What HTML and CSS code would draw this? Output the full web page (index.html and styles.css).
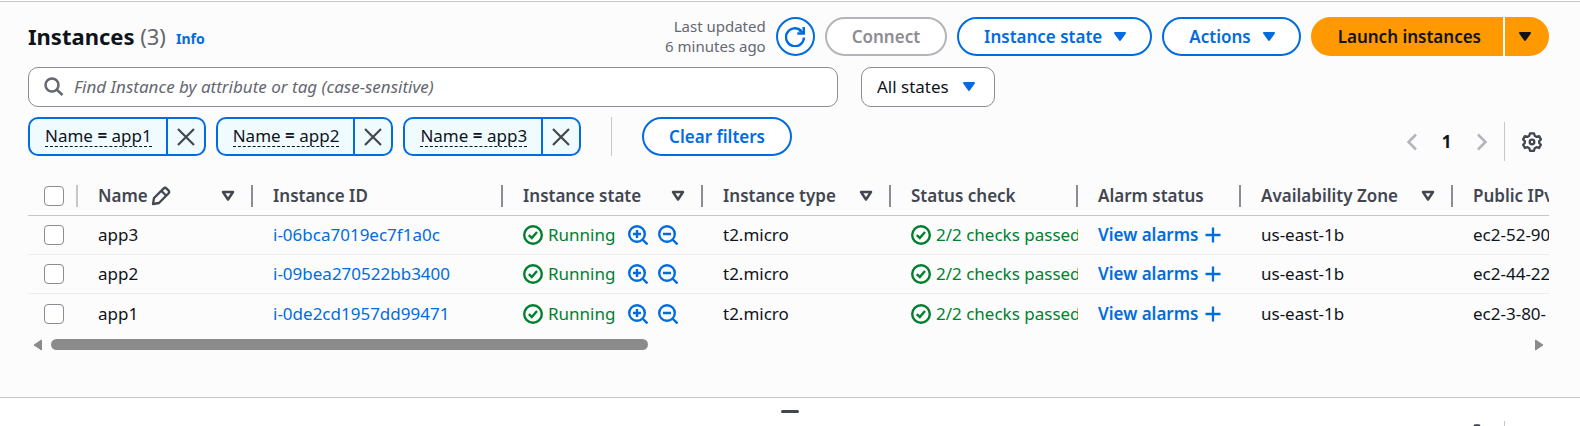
FILE: index.html
```html
<!DOCTYPE html>
<html lang="en">
<head>
<meta charset="utf-8">
<meta name="viewport" content="width=device-width, initial-scale=1">
<title>Instances</title>
<link rel="stylesheet" href="styles.css">
</head>
<body>
<svg class="sprite" aria-hidden="true">
  <symbol id="caret" viewBox="0 0 20 20"><path d="M5 6h10l-5 7z" fill="currentColor" stroke="currentColor" stroke-width="2" stroke-linejoin="round"/></symbol>
  <symbol id="sort" viewBox="0 0 20 20"><path d="M5 6h10l-5 7.500z" fill="none" stroke="currentColor" stroke-width="2.500" stroke-linejoin="round"/></symbol>
  <symbol id="close" viewBox="0 0 20 20"><path d="M2 2l16 16M18 2L2 18" fill="none" stroke="currentColor" stroke-width="2.200"/></symbol>
  <symbol id="refresh" viewBox="0 0 20 20"><path d="M19 10.500a9 9 0 1 1-3-7" fill="none" stroke="currentColor" stroke-width="2.400"/><path d="M18.800 0v6.500h-6.500" fill="none" stroke="currentColor" stroke-width="2.600"/><path d="M14 3l4.500 3" stroke="currentColor" stroke-width="2.400"/></symbol>
  <symbol id="search" viewBox="0 0 20 20"><circle cx="8" cy="8" r="6.500" fill="none" stroke="currentColor" stroke-width="2.500"/><path d="M12.500 12.500l6 5.500" stroke="currentColor" stroke-width="2.500"/></symbol>
  <symbol id="pencil" viewBox="0 0 20 20"><path d="M2 18l1-6L12.500 2.600a2.200 2.200 0 0 1 3.100 0l1.800 1.800a2.200 2.200 0 0 1 0 3.100L8 17zM10.500 5l4.500 4.500" fill="none" stroke="currentColor" stroke-width="2.300" stroke-linejoin="round"/></symbol>
  <symbol id="check" viewBox="0 0 20 20"><circle cx="10" cy="10" r="8.800" fill="none" stroke="currentColor" stroke-width="2.400"/><path d="M5.800 10.200l3 2.800 5.200-6" fill="none" stroke="currentColor" stroke-width="2.400"/></symbol>
  <symbol id="zoom-in" viewBox="0 0 20 20"><circle cx="9" cy="9" r="7.800" fill="none" stroke="currentColor" stroke-width="2.400"/><path d="M14.500 14.500l5 5M9 5v8M5 9h8" fill="none" stroke="currentColor" stroke-width="2.400"/></symbol>
  <symbol id="zoom-out" viewBox="0 0 20 20"><circle cx="9" cy="9" r="7.800" fill="none" stroke="currentColor" stroke-width="2.400"/><path d="M14.500 14.500l5 5M5 9h8" fill="none" stroke="currentColor" stroke-width="2.400"/></symbol>
  <symbol id="plus" viewBox="0 0 20 20"><path d="M10 2.500v15M2.500 10h15" stroke="currentColor" stroke-width="2.300"/></symbol>
  <symbol id="prev" viewBox="0 0 20 20"><path d="M14 2.500L6.500 10l7.500 7.500" fill="none" stroke="currentColor" stroke-width="2.500"/></symbol>
  <symbol id="next" viewBox="0 0 20 20"><path d="M6 2.500l7.500 7.500L6 17.500" fill="none" stroke="currentColor" stroke-width="2.500"/></symbol>
  <symbol id="gear" viewBox="0 0 20 20"><path d="M8 1.300h4l.7 2.500 1.900 1.100 2.500-.8 1.800 3.300-1.700 1.700v1.900l1.700 1.700-1.800 3.300-2.500-.8-1.900 1.100-.7 2.500H8l-.7-2.500-1.900-1.100-2.500.8-1.800-3.300 1.700-1.700V9.100L1.100 7.400l1.800-3.300 2.500.8 1.900-1.100z" fill="none" stroke="currentColor" stroke-width="2.300" stroke-linejoin="round"/><circle cx="10" cy="10" r="2.300" fill="none" stroke="currentColor" stroke-width="2.300"/></symbol>
  <symbol id="scroll-left" viewBox="0 0 10 12"><path d="M8.500 1v10L1 6z" fill="currentColor" stroke="currentColor" stroke-linejoin="round"/></symbol>
  <symbol id="scroll-right" viewBox="0 0 10 12"><path d="M1.500 1v10L9 6z" fill="currentColor" stroke="currentColor" stroke-linejoin="round"/></symbol>
</svg>

<main class="panel">
  <header class="header">
    <h1 class="title">Instances <span class="count">(3)</span></h1>
    <a class="info" href="#">Info</a>
    <div class="actions">
      <p class="updated">Last updated<br>6 minutes ago</p>
      <button class="btn btn-round" type="button" aria-label="Refresh"><svg class="icon"><use href="#refresh"/></svg></button>
      <button class="btn" type="button" disabled>Connect</button>
      <button class="btn btn-drop" type="button">Instance state<svg class="icon"><use href="#caret"/></svg></button>
      <button class="btn btn-drop" type="button">Actions<svg class="icon"><use href="#caret"/></svg></button>
      <div class="split">
        <button class="btn btn-primary split-main" type="button">Launch instances</button>
        <button class="btn btn-primary split-menu" type="button" aria-label="More launch options"><svg class="icon"><use href="#caret"/></svg></button>
      </div>
    </div>
  </header>

  <div class="filters">
    <label class="search">
      <svg class="icon"><use href="#search"/></svg>
      <input class="search-input" type="text" aria-label="Find Instance" placeholder="Find Instance by attribute or tag (case-sensitive)">
    </label>
    <div class="states">
      <select class="states-select" aria-label="State filter"><option>All states</option></select>
      <svg class="icon states-caret"><use href="#caret"/></svg>
    </div>
  </div>

  <div class="toolbar">
    <div class="tokens">
      <div class="token"><button class="token-label" type="button"><span class="token-text">Name <b>=</b> app1</span></button><button class="token-close" type="button" aria-label="Remove app1"><svg class="icon"><use href="#close"/></svg></button></div>
      <div class="token"><button class="token-label" type="button"><span class="token-text">Name <b>=</b> app2</span></button><button class="token-close" type="button" aria-label="Remove app2"><svg class="icon"><use href="#close"/></svg></button></div>
      <div class="token"><button class="token-label" type="button"><span class="token-text">Name <b>=</b> app3</span></button><button class="token-close" type="button" aria-label="Remove app3"><svg class="icon"><use href="#close"/></svg></button></div>
      <div class="clear"><button class="btn" type="button">Clear filters</button></div>
    </div>
    <nav class="pager" aria-label="Pages">
      <button class="pager-btn" type="button" disabled aria-label="Previous page"><svg class="icon"><use href="#prev"/></svg></button>
      <button class="pager-page" type="button">1</button>
      <button class="pager-btn" type="button" disabled aria-label="Next page"><svg class="icon"><use href="#next"/></svg></button>
      <div class="prefs"><button class="prefs-btn" type="button" aria-label="Preferences"><svg class="icon"><use href="#gear"/></svg></button></div>
    </nav>
  </div>

  <div class="table-wrap">
    <table class="table">
      <colgroup><col class="c-select"><col class="c-name"><col class="c-id"><col class="c-state"><col class="c-type"><col class="c-status"><col class="c-alarm"><col class="c-zone"><col class="c-dns"></colgroup>
      <thead>
        <tr>
          <th class="select-cell"><input class="check" type="checkbox" aria-label="Select all"></th>
          <th><div class="th">Name<svg class="icon"><use href="#pencil"/></svg><svg class="icon sort"><use href="#sort"/></svg></div></th>
          <th><div class="th">Instance ID</div></th>
          <th><div class="th">Instance state<svg class="icon sort"><use href="#sort"/></svg></div></th>
          <th><div class="th">Instance type<svg class="icon sort"><use href="#sort"/></svg></div></th>
          <th><div class="th">Status check</div></th>
          <th><div class="th">Alarm status</div></th>
          <th><div class="th">Availability Zone<svg class="icon sort"><use href="#sort"/></svg></div></th>
          <th><div class="th">Public IPv4 DNS</div></th>
        </tr>
      </thead>
      <tbody>
        <tr>
          <td class="select-cell"><input class="check" type="checkbox" aria-label="Select app3"></td>
          <td>app3</td>
          <td><a class="link" href="#">i-06bca7019ec7f1a0c</a></td>
          <td><div class="cell"><span class="ok"><svg class="icon"><use href="#check"/></svg>Running</span><button class="mini" type="button" aria-label="Include"><svg class="icon"><use href="#zoom-in"/></svg></button><button class="mini" type="button" aria-label="Exclude"><svg class="icon"><use href="#zoom-out"/></svg></button></div></td>
          <td>t2.micro</td>
          <td><span class="ok"><svg class="icon"><use href="#check"/></svg>2/2 checks passed</span></td>
          <td><a class="link alarm" href="#">View alarms<svg class="icon"><use href="#plus"/></svg></a></td>
          <td>us-east-1b</td>
          <td>ec2-52-90</td>
        </tr>
        <tr>
          <td class="select-cell"><input class="check" type="checkbox" aria-label="Select app2"></td>
          <td>app2</td>
          <td><a class="link" href="#">i-09bea270522bb3400</a></td>
          <td><div class="cell"><span class="ok"><svg class="icon"><use href="#check"/></svg>Running</span><button class="mini" type="button" aria-label="Include"><svg class="icon"><use href="#zoom-in"/></svg></button><button class="mini" type="button" aria-label="Exclude"><svg class="icon"><use href="#zoom-out"/></svg></button></div></td>
          <td>t2.micro</td>
          <td><span class="ok"><svg class="icon"><use href="#check"/></svg>2/2 checks passed</span></td>
          <td><a class="link alarm" href="#">View alarms<svg class="icon"><use href="#plus"/></svg></a></td>
          <td>us-east-1b</td>
          <td>ec2-44-22</td>
        </tr>
        <tr>
          <td class="select-cell"><input class="check" type="checkbox" aria-label="Select app1"></td>
          <td>app1</td>
          <td><a class="link" href="#">i-0de2cd1957dd99471</a></td>
          <td><div class="cell"><span class="ok"><svg class="icon"><use href="#check"/></svg>Running</span><button class="mini" type="button" aria-label="Include"><svg class="icon"><use href="#zoom-in"/></svg></button><button class="mini" type="button" aria-label="Exclude"><svg class="icon"><use href="#zoom-out"/></svg></button></div></td>
          <td>t2.micro</td>
          <td><span class="ok"><svg class="icon"><use href="#check"/></svg>2/2 checks passed</span></td>
          <td><a class="link alarm" href="#">View alarms<svg class="icon"><use href="#plus"/></svg></a></td>
          <td>us-east-1b</td>
          <td>ec2-3-80-</td>
        </tr>
      </tbody>
    </table>
  </div>
  <div class="scrollbar" aria-hidden="true">
    <svg class="scroll-arrow"><use href="#scroll-left"/></svg>
    <div class="track"><div class="thumb"></div></div>
    <svg class="scroll-arrow"><use href="#scroll-right"/></svg>
  </div>
</main>

<section class="details" aria-label="Details">
  <div class="grip"></div>
  <div class="details-bar">
    <svg class="icon"><use href="#gear"/></svg>
    <div class="details-divider"></div>
  </div>
</section>
</body>
</html>
```
FILE: styles.css
```css
:root {
  --blue: #006ce0;
  --green: #00802f;
  --ink: #0f141a;
  --slate: #424650;
  --muted: #656871;
  --line: #c6c6cd;
  --field: #8c8c94;
}

* { box-sizing: border-box; }

body {
  display: flex;
  flex-direction: column;
  margin: 0;
  height: 100vh;
  overflow: hidden;
  background: #fff;
  color: var(--ink);
  font: 17px/24px "Noto Sans", "Open Sans", sans-serif;
}

button, input, select { font: inherit; color: inherit; }
button { cursor: pointer; }
.sprite { display: none; }
.icon { width: 20px; height: 20px; flex: none; display: block; }

.panel {
  flex: none;
  margin-top: 1px;
  padding: 14px 31px 41px 28px;
  border-top: 1px solid var(--line);
  border-bottom: 1px solid var(--line);
  background: #fcfcfd;
}

.header { display: flex; align-items: center; }
.title { margin: 0; font-size: 22px; line-height: 30px; font-weight: 700; }
.count { font-weight: 400; color: var(--muted); }
.info { margin: 6px 0 0 10px; font-size: 14px; line-height: 20px; font-weight: 700; color: var(--blue); text-decoration: none; }
.actions { display: flex; align-items: flex-end; gap: 10px; margin-left: auto; }
.updated { margin: 0; font-size: 15px; line-height: 20px; text-align: right; color: var(--muted); }

.btn {
  display: flex;
  align-items: center;
  justify-content: center;
  height: 39px;
  padding: 0 25px;
  border: 2px solid var(--blue);
  border-radius: 20px;
  background: #fff;
  color: var(--blue);
  font-weight: 600;
  line-height: 22px;
  white-space: nowrap;
}
.btn:disabled { border-color: #b4b4bb; color: var(--field); }
.btn-round { width: 39px; padding: 0; }
.btn-drop { gap: 8px; padding-right: 20px; }
.btn-primary { border-color: #ff9900; background: #ff9900; color: var(--ink); }
.split { display: flex; gap: 2px; }
.split-main { border-radius: 20px 0 0 20px; padding: 0 20px 0 25px; }
.split-menu { border-radius: 0 20px 20px 0; width: 44px; padding: 0 4px 0 0; }

.filters { display: flex; gap: 23px; margin-top: 11px; }
.search {
  display: flex;
  align-items: center;
  gap: 10px;
  flex: 0 1 810px;
  height: 40px;
  padding: 0 15px;
  border: 1px solid var(--field);
  border-radius: 10px;
  background: #fff;
  color: var(--muted);
}
.search-input { flex: 1; min-width: 0; padding: 0; border: 0; outline: 0; background: none; }
.search-input::placeholder { color: var(--muted); font-style: italic; opacity: 1; }
.states { display: grid; align-items: center; }
.states-select {
  grid-area: 1 / 1;
  appearance: none;
  width: 134px;
  height: 40px;
  padding: 0 15px;
  border: 1px solid var(--field);
  border-radius: 10px;
  background: #fff;
}
.states-caret { grid-area: 1 / 1; justify-self: end; margin-right: 16px; color: var(--blue); pointer-events: none; }

.toolbar { display: flex; align-items: flex-start; justify-content: space-between; margin-top: 10px; }
.tokens { display: flex; gap: 10px; }
.token { display: flex; height: 39px; border: 2px solid var(--blue); border-radius: 10px; background: #f0fbff; }
.token-label { padding: 0 14px 0 15px; border: 0; border-right: 2px solid var(--blue); background: none; }
.token-text { display: block; line-height: 20px; border-bottom: 1px dashed var(--ink); }
.token-text b { font-weight: 600; }
.token-close { padding: 0 8px; border: 0; background: none; color: var(--slate); }
.clear { margin-left: 20px; padding-left: 30px; border-left: 1px solid var(--line); }

.pager { display: flex; align-items: center; margin-top: 5px; height: 39px; }
.pager-btn, .pager-page, .prefs-btn { display: grid; place-items: center; width: 35px; height: 35px; padding: 0; border: 0; background: none; }
.pager-btn { color: #b4b4bb; }
.pager-page { font-weight: 700; }
.prefs { display: flex; align-items: center; height: 39px; margin-left: 5px; padding-left: 9px; border-left: 1px solid var(--line); }
.prefs-btn { color: var(--slate); }

.table-wrap { overflow: hidden; margin-top: 15px; }
.table { width: 1625px; table-layout: fixed; border-spacing: 0; }
.c-select { width: 50px; }
.c-name { width: 175px; }
.c-id { width: 250px; }
.c-state { width: 200px; }
.c-type { width: 188px; }
.c-status { width: 187px; }
.c-alarm { width: 163px; }
.c-zone { width: 212px; }
.c-dns { width: 200px; }
.table th, .table td { padding: 0 0 0 20px; text-align: left; white-space: nowrap; overflow: hidden; }
.table th { height: 40px; border-bottom: 1px solid var(--line); color: var(--slate); font-weight: 600; }
.table td { height: 39px; border-bottom: 1px solid #ebebf0; }
.table tr:last-child td { border-bottom: 0; }
.table thead th { border-bottom: 1px solid var(--line); }
.table .select-cell { padding-left: 16px; }
.th { display: flex; align-items: center; gap: 3px; height: 22px; padding-right: 13px; border-right: 2px solid var(--field); }
.sort { margin-left: auto; }
thead .select-cell { background: linear-gradient(var(--line), var(--line)) right center / 2px 22px no-repeat; }
.check { appearance: none; display: block; width: 20px; height: 20px; margin: 0; border: 1px solid var(--field); border-radius: 4px; background: #fff; }
.cell { display: flex; align-items: center; gap: 10px; }
.ok { display: flex; align-items: center; gap: 5px; color: var(--green); }
.ok + .mini { margin-left: 3px; }
.mini { padding: 0; border: 0; background: none; color: var(--blue); }
.link { color: var(--blue); text-decoration: none; }
.alarm { display: flex; align-items: center; gap: 5px; font-weight: 600; }

.scrollbar { display: flex; align-items: center; gap: 8px; height: 23px; padding: 0 5px; color: #8b8b8b; }
.scroll-arrow { width: 10px; height: 12px; }
.track { flex: 1; }
.thumb { width: 40.5%; height: 11px; border-radius: 6px; background: #8b8b8b; }

.details { flex: 1; min-height: 0; overflow: hidden; }
.grip { width: 18px; height: 3px; margin: 12px auto 0; border-radius: 2px; background: var(--slate); }
.details-bar { display: flex; justify-content: flex-end; gap: 17px; margin-top: 8px; padding-right: 75px; color: var(--slate); }
.details-bar .icon { margin-top: 3px; }
.details-divider { width: 1px; height: 39px; background: var(--line); }
```
